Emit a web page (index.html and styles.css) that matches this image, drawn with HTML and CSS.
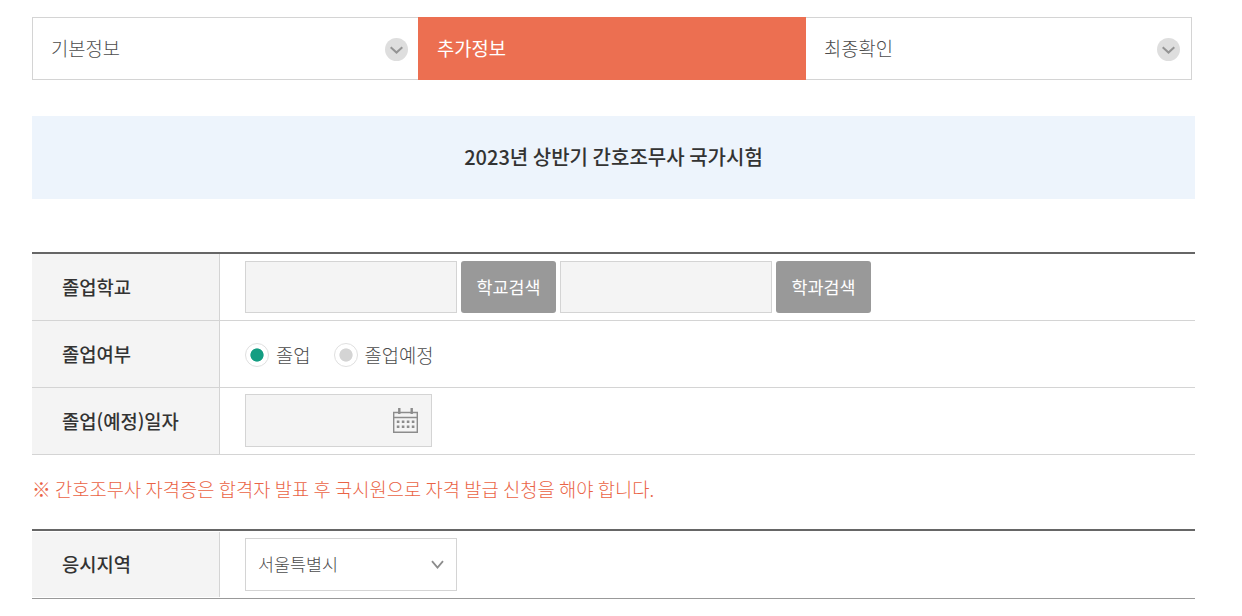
FILE: index.html
```html
<!DOCTYPE html>
<html lang="ko">
<head>
  <meta charset="UTF-8" />
  <meta name="viewport" content="width=device-width, initial-scale=1.0" />
  <title>추가정보</title>
  <link rel="stylesheet" href="styles.css">
</head>
<body>
  <ul class="step-tabs">
    <li>
      <a href="#">기본정보</a>
      <svg class="step-icon" width="23" height="23" viewBox="0 0 23 23">
        <circle cx="11.5" cy="11.5" r="11.5" fill="#dedede"/>
        <path d="M5.7 9.3L11.5 14.6L17.3 9.3" fill="none" stroke="#949494" stroke-width="2"/>
      </svg>
    </li>
    <li class="active"><a href="#">추가정보</a></li>
    <li>
      <a href="#">최종확인</a>
      <svg class="step-icon" width="23" height="23" viewBox="0 0 23 23">
        <circle cx="11.5" cy="11.5" r="11.5" fill="#dedede"/>
        <path d="M5.7 9.3L11.5 14.6L17.3 9.3" fill="none" stroke="#949494" stroke-width="2"/>
      </svg>
    </li>
  </ul>

  <h2 class="exam-title">2023년 상반기 간호조무사 국가시험</h2>

  <div class="form-table">
    <div class="form-row">
      <div class="form-th">졸업학교</div>
      <div class="form-td">
        <input type="text" class="input" readonly>
        <button type="button" class="btn-search">학교검색</button>
        <input type="text" class="input" readonly>
        <button type="button" class="btn-search">학과검색</button>
      </div>
    </div>
    <div class="form-row">
      <div class="form-th">졸업여부</div>
      <div class="form-td radio-group">
        <label class="radio"><input type="radio" name="grad" checked><span>졸업</span></label>
        <label class="radio"><input type="radio" name="grad"><span>졸업예정</span></label>
      </div>
    </div>
    <div class="form-row">
      <div class="form-th">졸업(예정)일자</div>
      <div class="form-td date-td">
        <div class="date-box">
          <svg width="25" height="25" viewBox="0 0 25 25">
            <path d="M0.7 4.5H24.3V24.3H0.7ZM0.7 9.5H24.3" fill="none" stroke="#8c8c8c" stroke-width="1.4"/>
            <path d="M6.3 0V6M18.7 0V6" fill="none" stroke="#8c8c8c" stroke-width="2.4"/>
            <path d="M3.8 13.7H21.6M3.8 18.8H21.6" fill="none" stroke="#8c8c8c" stroke-width="2.6" stroke-dasharray="2.6 2.4"/>
          </svg>
        </div>
      </div>
    </div>
  </div>

  <p class="notice">※ 간호조무사 자격증은 합격자 발표 후 국시원으로 자격 발급 신청을 해야 합니다.</p>

  <div class="form-table area-table">
    <div class="form-row">
      <div class="form-th">응시지역</div>
      <div class="form-td">
        <div class="select">
          <span>서울특별시</span>
          <svg width="13" height="10" viewBox="0 0 13 10">
            <path d="M1 1.2L6.5 7.6L12 1.2" fill="none" stroke="#8c8c8c" stroke-width="1.8"/>
          </svg>
        </div>
      </div>
    </div>
  </div>
</body>
</html>
```
FILE: styles.css
```css
* {
  box-sizing: border-box;
}
body {
  margin: 0;
  padding: 17px 47px 0 32px;
  font-family: "Noto Sans CJK KR", sans-serif;
  font-size: 18.75px;
  font-weight: 300;
  line-height: 28px;
  word-spacing: -1px;
  color: #4c4c4c;
  background-color: #fff;
}
.step-tabs {
  display: flex;
  width: 1160px;
  height: 63px;
  margin: 0 0 36px;
  padding: 0;
  list-style: none;
}
.step-tabs li {
  display: flex;
  align-items: center;
  justify-content: space-between;
  width: 386px;
  padding: 0 11px 0 18px;
  border: 1px solid #d4d4d4;
}
.step-tabs li:first-child {
  padding-right: 10px;
  border-right: none;
}
.step-tabs li:last-child {
  border-left: none;
}
.step-tabs a {
  padding-bottom: 2px;
  color: #4c4c4c;
  text-decoration: none;
}
.step-tabs .active {
  width: 388px;
  background-color: #ec6f51;
  border-color: #ec6f51;
}
.step-tabs .active a {
  color: #fff;
  font-weight: 400;
}
.step-icon {
  margin-top: 2px;
}
.exam-title {
  height: 83px;
  margin: 0 0 53px;
  background-color: #edf4fc;
  color: #333;
  font-size: 20px;
  font-weight: 500;
  line-height: 82px;
  text-align: center;
}
.form-table {
  border-top: 2px solid #666;
}
.form-row {
  display: flex;
  height: 67px;
  border-bottom: 1px solid #d4d4d4;
}
.form-th {
  display: flex;
  align-items: center;
  width: 188px;
  padding-left: 30px;
  background-color: #f4f4f4;
  border-right: 1px solid #d4d4d4;
  color: #333;
  font-weight: 500;
}
.form-td {
  display: flex;
  flex: 1;
  align-items: center;
  gap: 4px;
  padding-left: 25px;
}
.input {
  width: 212px;
  height: 52px;
  padding: 0 12px;
  background-color: #f4f4f4;
  border: 1px solid #d4d4d4;
}
.btn-search {
  width: 95px;
  height: 52px;
  padding: 0 0 2px;
  background-color: #999;
  border: none;
  border-radius: 3px;
  color: #fff;
  font-family: inherit;
  font-size: 17.4px;
  font-weight: 400;
}
.radio-group {
  gap: 23px;
  padding-top: 2px;
}
.radio {
  display: flex;
  align-items: center;
  gap: 7px;
}
.radio input {
  appearance: none;
  width: 24px;
  height: 24px;
  margin: 0;
  border: 1px solid #e0e0e0;
  border-radius: 50%;
  background: radial-gradient(circle, #d4d4d4 6.2px, #fff 7px);
}
.radio input:checked {
  background: radial-gradient(circle, #149d82 6.2px, #fff 7px);
}
.date-box {
  display: flex;
  align-items: center;
  justify-content: flex-end;
  width: 187px;
  height: 53px;
  padding-right: 13px;
  background-color: #f4f4f4;
  border: 1px solid #d4d4d4;
}
.date-td {
  align-items: flex-start;
  padding-top: 6px;
}
.notice {
  margin: 20px 0 26px;
  color: #ea6345;
}
.area-table .form-row {
  height: 68px;
  padding: 1px 0;
  border-bottom-color: #999;
}
.area-table .form-th {
  padding-bottom: 2px;
}
.select {
  display: flex;
  align-items: center;
  justify-content: space-between;
  width: 212px;
  height: 53px;
  padding: 0 12px;
  border: 1px solid #d4d4d4;
  font-size: 17.4px;
}
.select span {
  padding-bottom: 2px;
}
```
